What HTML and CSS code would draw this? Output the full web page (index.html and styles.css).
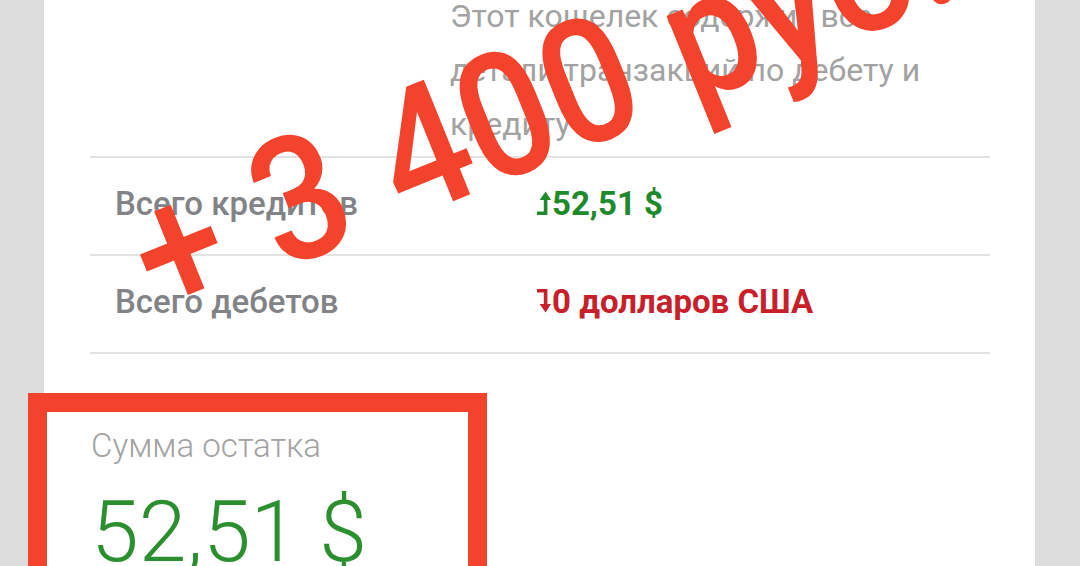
FILE: index.html
```html
<!DOCTYPE html>
<html lang="ru">
<head>
  <meta charset="UTF-8">
  <meta name="viewport" content="width=device-width, initial-scale=1.0">
  <title>Кошелек</title>
  <link rel="stylesheet" href="styles.css">
</head>
<body>
  <main class="card">
    <section class="info">
      <div class="info__side"></div>
      <p class="info__text">Этот кошелек содержит все детали транзакций по дебету и кредиту</p>
    </section>
    <dl class="totals">
      <div class="totals__row">
        <dt class="totals__label">Всего кредитов</dt>
        <dd class="totals__value totals__value--credit">
          <svg class="arrow" viewBox="0 0 14 24" aria-hidden="true">
            <path d="M0 22.2 H8.6 V8" fill="none" stroke="currentColor" stroke-width="3.6"/>
            <path d="M2.6 9 L8.6 0.5 L14 9 Z" fill="currentColor"/>
          </svg>52,51 $
        </dd>
      </div>
      <div class="totals__row">
        <dt class="totals__label">Всего дебетов</dt>
        <dd class="totals__value totals__value--debit">
          <svg class="arrow" viewBox="0 0 14 24" aria-hidden="true">
            <path d="M0 1.8 H8.6 V16" fill="none" stroke="currentColor" stroke-width="3.6"/>
            <path d="M2.6 15 L8.6 23.5 L14 15 Z" fill="currentColor"/>
          </svg>0 долларов США
        </dd>
      </div>
    </dl>
    <section class="balance">
      <p class="balance__label">Сумма остатка</p>
      <p class="balance__value">52,51 $</p>
    </section>
  </main>

  <!-- annotations drawn over the screenshot -->
  <div class="frame"></div>
  <div class="stamp">+ 3 400 руб.</div>
</body>
</html>
```

FILE: styles.css
```css
:root {
  --page-bg: #dddddd;
  --card-bg: #ffffff;
  --divider: #e2e2e2;
  --text-muted: #a2a2a2;
  --text-label: #818386;
  --green: #1f8a2c;
  --green-light: #2b8f30;
  --red: #c8202a;
  --marker: #f4432d;
}
* {
  margin: 0;
  padding: 0;
  box-sizing: border-box;
}
html,
body {
  height: 100%;
  overflow: hidden;
}
body {
  position: relative;
  background-color: var(--page-bg);
  font-family: Roboto, "Noto Sans", sans-serif;
}
.card {
  margin-left: 44px;
  width: 991px;
  min-height: 100%;
  padding: 0 45px 0 46px;
  background-color: var(--card-bg);
}

/* description */
.info {
  display: grid;
  grid-template-columns: 360px 1fr;
  margin-top: -11px;
  padding-bottom: 5px;
  border-bottom: 2px solid var(--divider);
}
.info__text {
  max-width: 500px;
  font-size: 32px;
  line-height: 54px;
  color: var(--text-muted);
}

/* totals */
.totals__row {
  display: grid;
  grid-template-columns: 445px 1fr;
  align-items: center;
  height: 98px;
  padding-bottom: 6px;
  border-bottom: 2px solid var(--divider);
}
.totals__label {
  padding-left: 25px;
  font-size: 33px;
  font-weight: 500;
  color: var(--text-label);
}
.totals__value {
  display: flex;
  align-items: center;
  gap: 1px;
  padding-left: 2px;
  font-size: 33px;
  font-weight: 700;
}
.totals__value--credit {
  color: var(--green);
}
.totals__value--debit {
  color: var(--red);
}
.arrow {
  width: 14px;
  height: 24px;
  flex: none;
}

/* balance */
.balance {
  padding-top: 72px;
  padding-left: 1px;
}
.balance__label {
  font-size: 33px;
  font-weight: 300;
  line-height: 40px;
  color: var(--text-muted);
}
.balance__value {
  margin-top: 16px;
  font-size: 86px;
  font-weight: 300;
  line-height: 100px;
  color: var(--green-light);
}

/* red marker annotations */
.frame {
  position: absolute;
  left: 28px;
  top: 393px;
  width: 459px;
  height: 260px;
  border: 19px solid var(--marker);
}
.stamp {
  position: absolute;
  left: 106px;
  top: 184px;
  font-size: 174px;
  font-weight: 500;
  line-height: 1;
  word-spacing: 5px;
  white-space: nowrap;
  color: var(--marker);
  transform-origin: 0 0;
  transform: rotate(-22deg) scaleX(0.9);
}
```
